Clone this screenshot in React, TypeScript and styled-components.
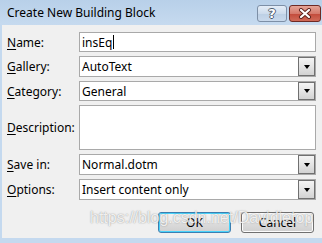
import styled, { createGlobalStyle } from "styled-components";

const GlobalStyle = createGlobalStyle`
  html, body {
    margin: 0;
    padding: 0;
    background: #f0f0f0;
  }
  * {
    box-sizing: border-box;
  }
`;

const fields = [
  { label: "Name", key: "N", rest: "ame:", value: "insEq", kind: "text" },
  { label: "Gallery", key: "G", rest: "allery:", value: "AutoText", kind: "select" },
  { label: "Category", key: "C", rest: "ategory:", value: "General", kind: "select" },
  { label: "Description", key: "D", rest: "escription:", value: "", kind: "area" },
  { label: "Save in", key: "S", rest: "ave in:", value: "Normal.dotm", kind: "select" },
  { label: "Options", key: "O", rest: "ptions:", value: "Insert content only", kind: "select" },
];

export default function App() {
  return (
    <>
      <GlobalStyle />
      <SWindow>
        <STitleBar>
          <STitle>Create New Building Block</STitle>
          <SCaptionButtons>
            <SHelpButton>?</SHelpButton>
            <SCloseButton>
              <svg width="14" height="11" viewBox="0 0 14 11">
                <path
                  d="M3 2 L11 9 M11 2 L3 9"
                  stroke="#5a1f1a"
                  strokeWidth="4"
                  strokeLinecap="round"
                />
                <path
                  d="M3 2 L11 9 M11 2 L3 9"
                  stroke="#ffffff"
                  strokeWidth="2.2"
                  strokeLinecap="round"
                />
              </svg>
            </SCloseButton>
          </SCaptionButtons>
        </STitleBar>
        <SBody>
          <SForm>
            {fields.map((f) => (
              <SRow key={f.label}>
                <SLabel>
                  <u>{f.key}</u>
                  {f.rest}
                </SLabel>
                <SField>
                  <SValue>
                    {f.value}
                    {f.kind === "text" && <SCaret />}
                  </SValue>
                  {f.kind === "select" && (
                    <SDropButton>
                      <SArrow />
                    </SDropButton>
                  )}
                </SField>
              </SRow>
            ))}
          </SForm>
          <SFooter>
            <SButton primary>OK</SButton>
            <SButton>Cancel</SButton>
          </SFooter>
          <SWatermark>https://blog.csdn.net/Davidietop</SWatermark>
        </SBody>
      </SWindow>
    </>
  );
}

const SWindow = styled.div`
  position: relative;
  width: 322px;
  height: 243px;
  display: flex;
  flex-direction: column;
  overflow: hidden;
  background: #c4d9ef;
  font-family: "Noto Sans", "Open Sans", sans-serif;
  font-size: 12px;
  color: #000;
`;

const STitleBar = styled.div`
  height: 25px;
  flex: none;
  display: flex;
  align-items: center;
  justify-content: space-between;
  padding: 0 1px 0 7px;
  background: linear-gradient(#b8d0e9, #c6daef);
`;

const STitle = styled.span`
  font-size: 12px;
  line-height: 1;
  padding-top: 1px;
`;

const SCaptionButtons = styled.div`
  display: flex;
  gap: 2px;
  align-self: flex-start;
  margin-top: 5px;
`;

const SHelpButton = styled.div`
  width: 30px;
  height: 17px;
  display: flex;
  align-items: center;
  justify-content: center;
  border: 1px solid #7d8fa6;
  border-radius: 3px;
  background: linear-gradient(#e4edf7, #cddbec 50%, #bccfe4 51%, #c9d9ec);
  color: #ffffff;
  font-family: "DejaVu Sans", sans-serif;
  font-weight: bold;
  font-size: 13px;
  line-height: 1;
  text-shadow: 1px 0 0 #505d6e, -1px 0 0 #505d6e, 0 1px 0 #505d6e,
    0 -1px 0 #505d6e;
`;

const SCloseButton = styled.div`
  width: 32px;
  height: 17px;
  display: flex;
  align-items: center;
  justify-content: center;
  border: 1px solid #6e2a24;
  border-radius: 3px;
  background: linear-gradient(#e6a597, #d57a6c 50%, #c24a3a 51%, #d06a58);
`;

const SBody = styled.div`
  position: relative;
  flex: 1;
  display: flex;
  flex-direction: column;
  margin-left: 2px;
  padding: 7px 6px 0 5px;
  background: #f0f0f0;
  border-bottom: 5px solid #c4d9ef;
`;

const SForm = styled.div`
  display: grid;
  grid-template-columns: 72px 1fr;
  grid-template-rows: 20px 21px 20px 45px 21px 21px;
  row-gap: 4px;
`;

const SRow = styled.div`
  display: contents;
`;

const SLabel = styled.div`
  display: flex;
  align-items: center;
  font-size: 12px;
  u {
    text-decoration-thickness: 1px;
    text-underline-offset: 2px;
  }
`;

const SField = styled.div`
  display: flex;
  align-items: stretch;
  border: 1px solid #a9a9a9;
  background: #ffffff;
`;

const SValue = styled.div`
  flex: 1;
  display: flex;
  align-items: center;
  padding-left: 2px;
  font-size: 12px;
  white-space: nowrap;
`;

const SCaret = styled.span`
  display: inline-block;
  width: 1px;
  height: 14px;
  margin-left: 1px;
  background: #000;
`;

const SDropButton = styled.div`
  width: 17px;
  flex: none;
  display: flex;
  align-items: center;
  justify-content: center;
  border: 1px solid #707070;
  background: linear-gradient(#f4f4f4, #e6e6e6 45%, #d2d2d2);
`;

const SArrow = styled.div`
  width: 0;
  height: 0;
  border-left: 3.5px solid transparent;
  border-right: 3.5px solid transparent;
  border-top: 4px solid #000;
`;

const SFooter = styled.div`
  display: flex;
  justify-content: flex-end;
  gap: 10px;
  margin-top: 12px;
  padding-right: 2px;
`;

const SButton = styled.div<{ primary?: boolean }>`
  width: 73px;
  height: 21px;
  display: flex;
  align-items: center;
  justify-content: center;
  border: 1px solid ${(p) => (p.primary ? "#3c7fb1" : "#707070")};
  border-radius: 3px;
  background: linear-gradient(#f2f2f2, #ebebeb 50%, #dddddd 51%, #cfcfcf);
  box-shadow: ${(p) => (p.primary ? "inset 0 0 0 1px #48d3fb" : "inset 0 0 0 1px #fcfcfc")};
  font-size: 12px;
`;

const SWatermark = styled.div`
  position: absolute;
  left: 88px;
  top: 184px;
  font-family: "Liberation Sans", Arial, sans-serif;
  font-size: 16px;
  color: rgba(255, 255, 255, 0.85);
  text-shadow: 0 0 1px rgba(80, 80, 80, 0.5), 0 0 2px rgba(120, 120, 120, 0.3);
  white-space: nowrap;
  pointer-events: none;
`;
